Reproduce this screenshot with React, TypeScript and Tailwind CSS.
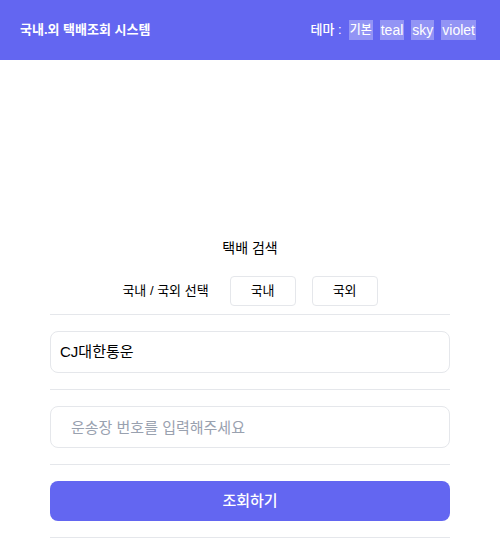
import React from "react";

const themes = ["기본", "teal", "sky", "violet"];

const App = () => {
  return (
    <div
      className="w-full min-h-[550px] bg-white text-black"
      style={{ fontFamily: '"Liberation Sans", "Noto Sans CJK KR", sans-serif' }}
    >
      {/* Header */}
      <header className="h-[60px] bg-[#6366f1] flex items-center justify-between pl-5 pr-6 text-white">
        <h1 className="text-[13px] font-bold">국내.외 택배조회 시스템</h1>
        <div className="flex items-center gap-[7px] text-sm font-medium">
          <span className="text-[13px]">테마 :</span>
          {themes.map((t) => (
            <span
              key={t}
              className={`bg-white/30 px-[1px] leading-5 ${t === "기본" ? "text-[12px]" : ""}`}
            >
              {t}
            </span>
          ))}
        </div>
      </header>

      {/* Search */}
      <main className="w-[400px] mx-auto mt-[178px]">
        <h2 className="text-sm text-center leading-5 mb-[18px]">택배 검색</h2>
        <div className="flex items-center justify-center gap-4 pb-2 border-b border-gray-200">
          <span className="text-[13px] mr-[5px]">국내 / 국외 선택</span>
          <button className="w-[66px] h-[30px] border border-gray-200 rounded text-[13px]">
            국내
          </button>
          <button className="w-[66px] h-[30px] border border-gray-200 rounded text-[13px]">
            국외
          </button>
        </div>
        <div className="py-4 border-b border-gray-200">
          <div className="h-[42px] border border-gray-200 rounded-lg flex items-center px-[9px] text-[15px]">
            CJ대한통운
          </div>
        </div>
        <div className="py-4 border-b border-gray-200">
          <input
            className="w-full h-[42px] border border-gray-200 rounded-lg px-5 text-[15px] outline-none placeholder:text-gray-400"
            placeholder="운송장 번호를 입력해주세요"
          />
        </div>
        <div className="py-4 border-b border-gray-200">
          <button className="w-full h-10 bg-[#6366f1] rounded-lg text-white text-[15px] font-medium">
            조회하기
          </button>
        </div>
      </main>
    </div>
  );
};

export default App;
